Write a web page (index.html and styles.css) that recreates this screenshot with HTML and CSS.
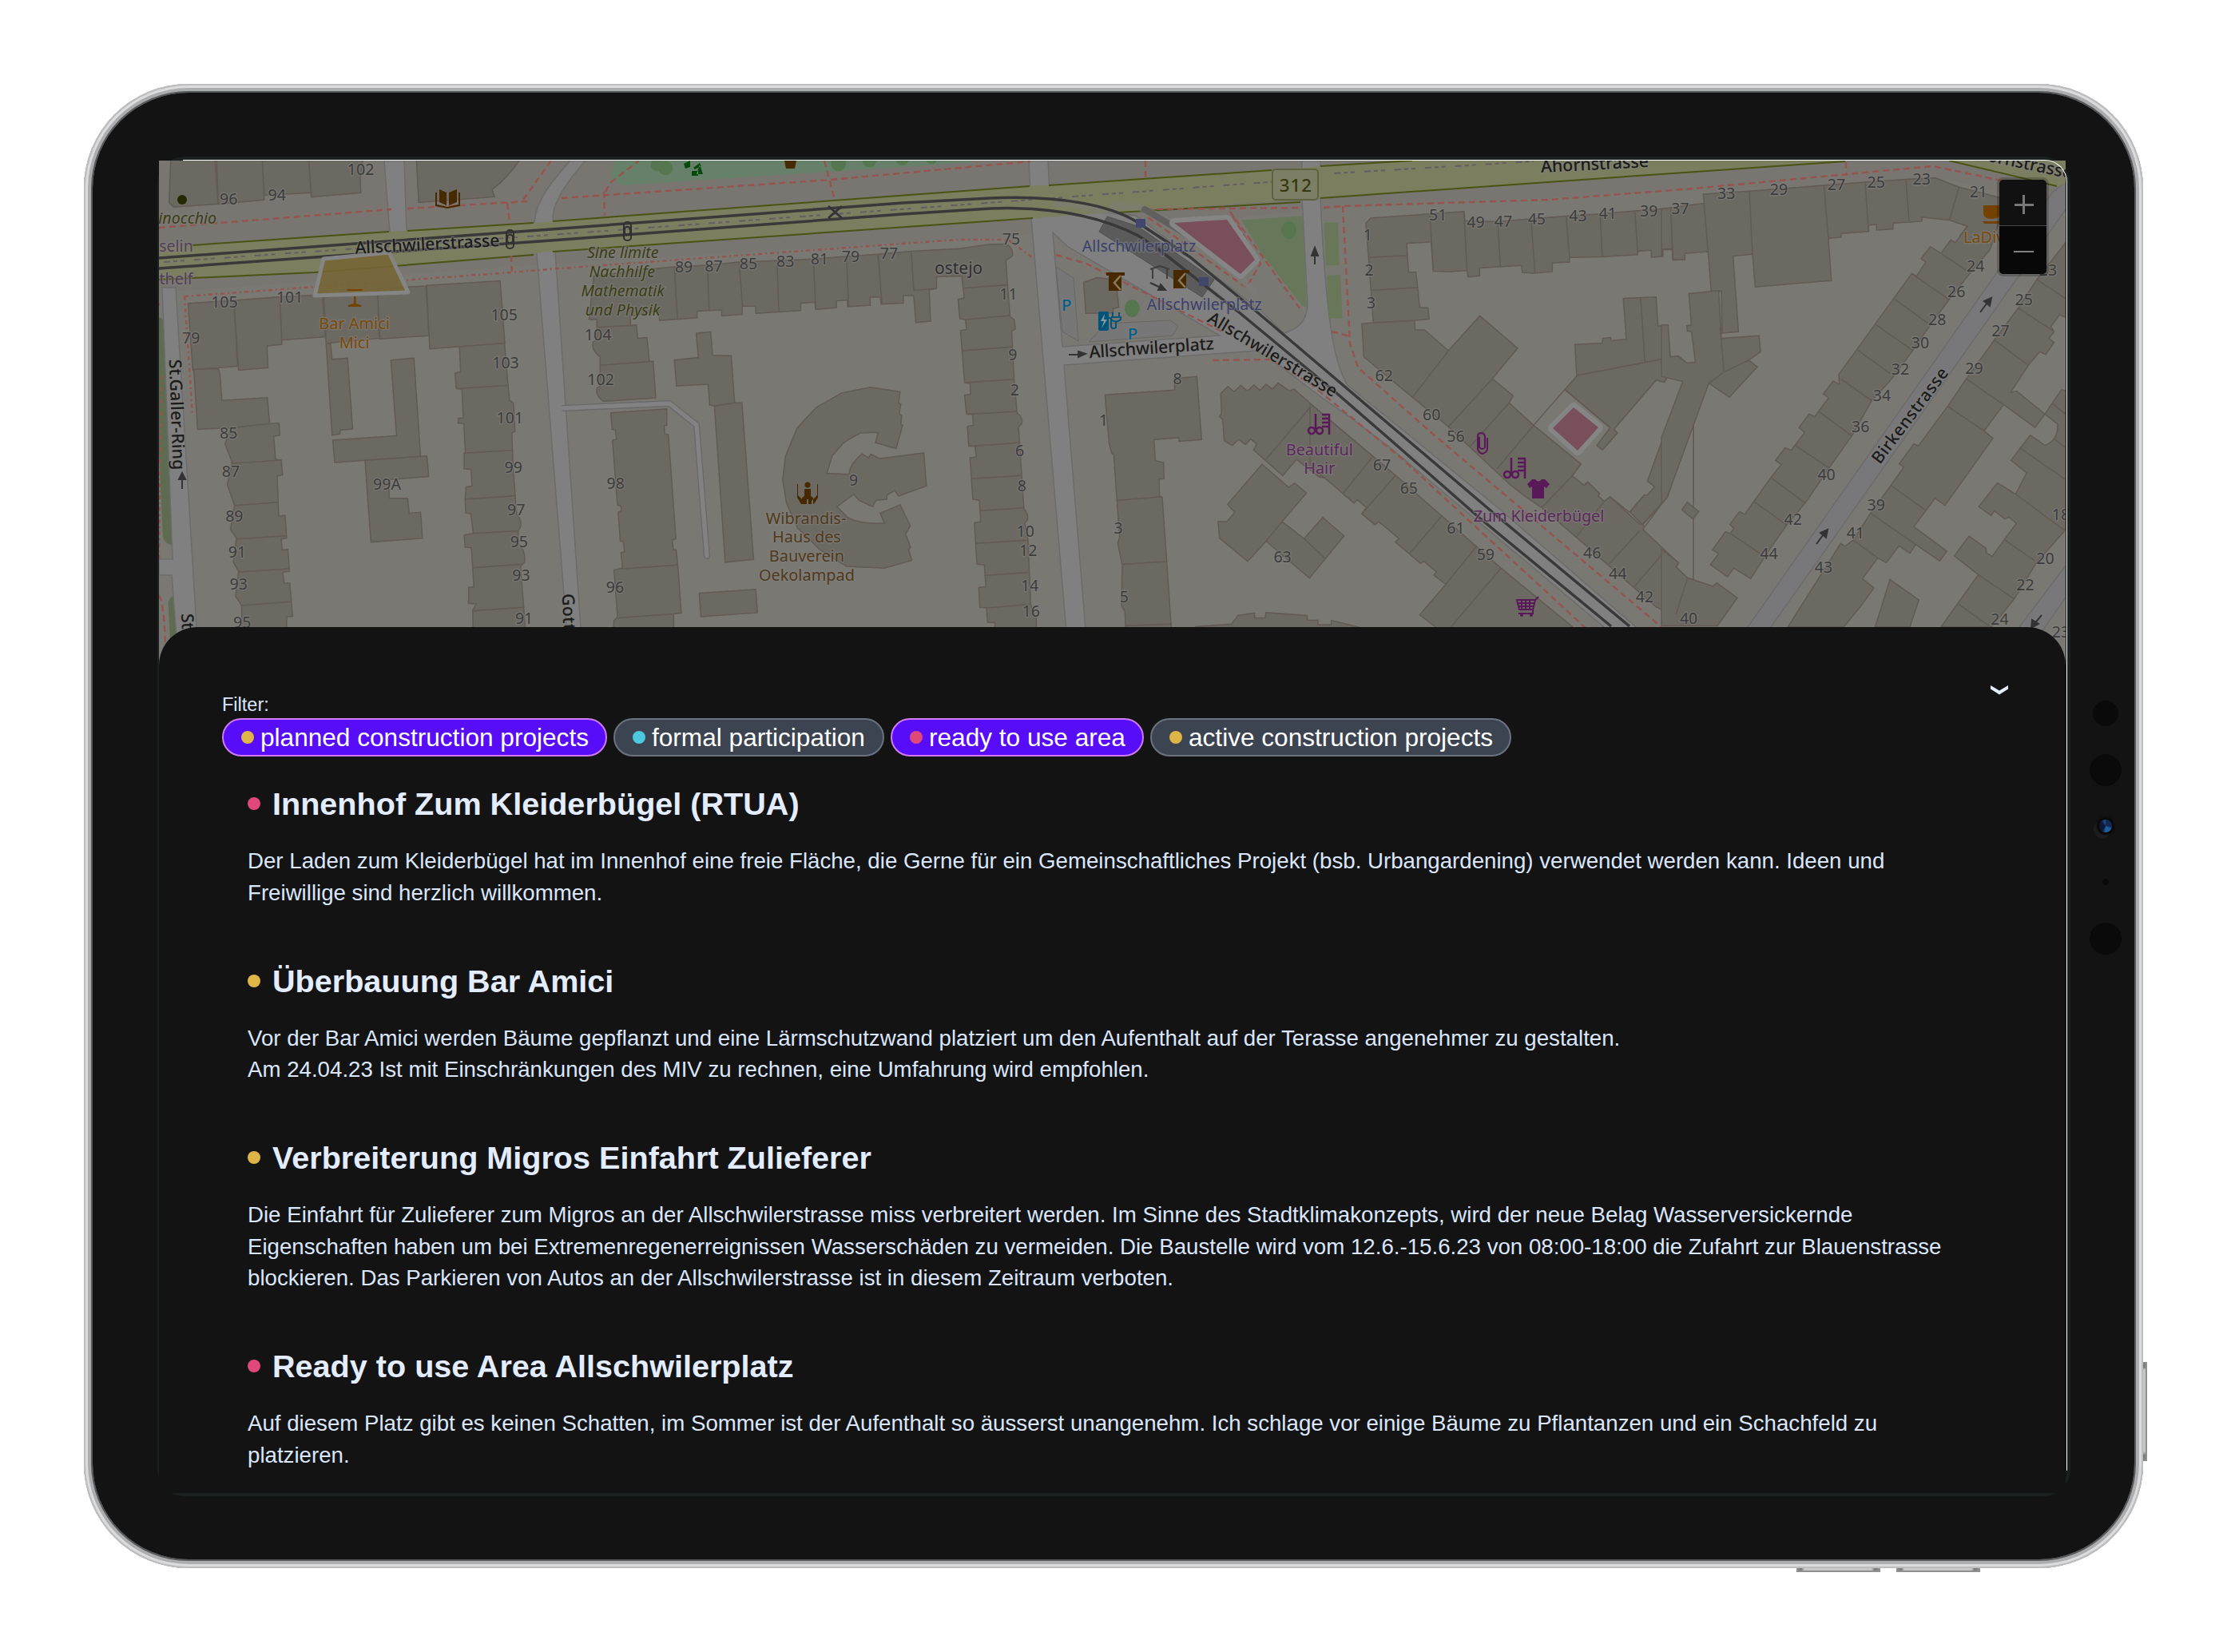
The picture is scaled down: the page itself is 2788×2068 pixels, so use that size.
FILE: index.html
```html
<!DOCTYPE html>
<html lang="de">
<head>
<meta charset="utf-8">
<title>Projekte</title>
<link rel="stylesheet" href="styles.css">
</head>
<body>
<div class="device">
  <i class="key key-side"></i><i class="key key-a"></i><i class="key key-b"></i>
  <div class="bezel">
    <div class="screen">
      <svg class="map" viewBox="199 201 2387 650" preserveAspectRatio="none">
        <rect class="land" x="199" y="201" width="2387" height="650"/>
        <path class="verge" d="M199 201H2440L2586 240V260L2440 225 2080 240 1650 262 1330 292 690 330 199 366Z"/>

        <!-- parks -->
        <g transform="translate(690 190) scale(.3954 .389)">
          <path class="park" d="M205 26 188 70 195 90 225 108 1330 34V26Z"/>
          <g class="tree"><circle cx="335" cy="42" r="20"/><circle cx="362" cy="52" r="23"/><circle cx="910" cy="38" r="24"/><circle cx="1008" cy="28" r="22"/><circle cx="1112" cy="24" r="20"/><circle cx="1204" cy="22" r="18"/></g>
        </g>
        <g transform="translate(190 190) scale(.3954 .389)">
          <path class="grass dark" d="M22 530 36 540 50 760 88 1235Q85 1262 60 1264 38 1260 35 1235L22 950ZM52 1450Q60 1425 80 1427 100 1432 102 1450L106 1568H58Z"/>
        </g>

        <!-- side streets -->
        <g class="street">
          <path d="M481 201H506L509 291H488Z"/>
          <path d="M714 201C690 228 671 250 669 280L714 845H731L692 270C694 250 712 225 733 201Z"/>
          <path d="M1288 201H1312L1314 240H1290Z"/>
          <path fill-rule="evenodd" d="M1291 272 1340 850H1364L1332 457 1573 439C1600 452 1640 490 1683 517L1740 560 2007 784 2080 850H2130L2047 784 1877 637 1687 482C1670 455 1660 400 1653 248H1630L1637 381C1636 405 1622 413 1607 417L1580 390 1422 270 1300 258ZM1318 291 1337 309 1440 369 1527 420 1330 434Z"/>
          <path d="M1630 201H1653V212H1630Z"/>
          <path d="M203 360H220L250 850H225L215 720H199V700H216Z"/>
          <path class="lane" d="M2188 785 2500 341 2570 240 2586 228V262L2527 346 2217 785 2170 850H2140Z"/>
          <path class="lane" d="M2528 785 2586 708V748L2560 785 2520 850H2480Z"/>
        </g>
        <g transform="translate(1240 190) scale(.3333 .389)">
          <path class="grass" d="M942 220 1172 206 1188 500 1170 495 1020 330Z"/>
          <path class="grass dim" d="M1253 228h52l5 138h-50zM1264 398l50-2 8 140h-52z"/>
          <circle class="tree" cx="1121" cy="252" r="28"/>
          <circle class="tree" cx="532" cy="504" r="28"/>
        </g>
        <path class="alley-edge" d="M706 511 838 505 872 532 885 696"/>
        <path class="alley" d="M704 511 838 505 872 532 885 696"/>

        <!-- buildings, west block -->
        <g class="buildings" transform="translate(190 190) scale(.3954 .389)">
          <path d="M60 26 55 165 70 178 210 168 200 26ZM205 26 211 168 356 155 350 26ZM350 26 356 140 505 132 497 26ZM497 26 505 146 662 132 660 85 668 26ZM838 26 845 163 1085 145 1078 122Q1130 80 1165 26Z"/>
          <path d="M115 488 260 478 272 690 130 702ZM260 478 405 467 412 620 365 625 368 695 275 703ZM405 467 540 460 550 595 412 606ZM545 468 715 450 722 600 552 616ZM715 440 868 432 878 592 720 602ZM870 430 1103 415 1118 616 880 634Z"/>
          <path d="M133 700 210 697 216 715 222 800 366 791 373 875 403 873 405 912 386 916 392 990 410 992 414 1040 397 1043 402 1172 422 1170 427 1243 410 1246 413 1282 431 1280 436 1350 415 1353 419 1388 437 1388 446 1495 427 1497V1568H285V1460L265 1430 275 1350 258 1320 268 1243 249 1215 262 1138 239 1070 255 1000 232 940 250 888 145 893Z"/>
          <path class="party" d="M250 888 373 875M250 1003 410 992M262 1138 402 1128M268 1246 425 1236M275 1352 435 1342M282 1460 440 1448"/>
          <path d="M552 616 566 618 571 668 620 664 636 892 596 896V908L571 912ZM757 670 830 664 851 980 579 1000 573 928 775 914ZM675 992 871 979 877 1045 750 1055 752 1115 810 1115 815 1163 851 1160 857 1244 694 1256Z"/>
          <path d="M974 627 1117 616 1128 750 1133 800 1145 808 1150 900 1140 905 1144 1015 1155 1165Q1172 1185 1168 1205L1160 1220V1260Q1185 1285 1180 1320L1168 1335 1180 1500 1185 1568H1018L1016 1476 1027 1455 1003 1453V1402L1020 1400 1012 1275 992 1272 989 1233 1018 1228 1010 1165 994 1162 992 1118 995 1078 1014 1076 1011 1022 989 1020V970L993 968 988 875 970 873 971 858 986 856 982 764 964 762 960 712 978 708Z"/>
          <path class="party" d="M964 762 1128 752M989 970 1144 960M993 1118 1153 1107M1018 1228 1160 1220M1020 1338 1168 1328M1018 1477 1180 1466"/>
        </g>

        <!-- buildings, centre block -->
        <g class="buildings" transform="translate(690 190) scale(.3954 .389)">
          <path d="M135 400 290 380 390 370 495 365 595 355 715 350 830 345 935 337 1035 330 1140 320 1290 312 1385 298 1440 297Q1465 310 1460 335L1440 350 1445 428 1453 530 1466 540 1470 570 1458 577 1466 735 1475 840Q1495 855 1490 875L1480 885 1490 1045 1497 1150Q1512 1165 1508 1185L1500 1195 1510 1250 1518 1455 1536 1505V1568H1405V1515H1382L1378 1468 1357 1466 1354 1402 1376 1400 1372 1330 1348 1327 1340 1194 1360 1190 1356 1122 1335 1118 1326 985 1346 982 1342 948 1322 946 1318 884 1337 880 1335 845 1315 843 1309 783 1328 780 1326 745 1309 743 1296 575 1315 572 1312 540 1294 537 1288 475 1308 470 1300 400 1220 402V440L1197 444 1201 545 1155 550 1148 463 1115 463V487L1045 490 1042 468 1010 468V494L938 498V477L903 480V502L838 507 835 484 790 487V511L648 520V497H605V523L540 528V509L462 513V534L343 543 340 510 250 530 252 560 270 558 274 600 303 598 311 674 323 676 331 792 165 803Q140 785 145 760L155 755V660Q125 635 133 612L145 605V540H120Z"/>
          <path class="party" d="M390 370 400 540M495 365 500 510M595 355 606 497M715 350 721 515M830 345 838 507M935 337 942 497M1035 330 1047 488M1140 320 1148 446 1220 440M1308 438 1445 428M1312 540 1453 527M1300 640 1460 628M1309 743 1466 732M1315 845 1475 835M1322 948 1482 936M1330 1052 1488 1042M1357 1155 1497 1146M1345 1260 1505 1250M1372 1363 1510 1354M1376 1468 1518 1456M145 565 270 558M155 687 325 674"/>
          <path d="M459 584 505 579 511 655 570 656 581 808 604 808 641 1312 551 1321 517 818 502 815 497 748 397 754 390 670 466 662ZM189 840 366 827V880L358 882 360 908 371 910 395 1245 383 1250 387 1280 396 1282 401 1330 412 1484 388 1487V1568H198V1510L210 1496 199 1346 226 1340 221 1290 232 1288 229 1255 219 1253 212 1160 222 1156 221 1140 210 1137 194 928 207 925 203 895 193 893ZM469 1420 648 1408 653 1483 474 1496Z"/>
          <path class="party" d="M226 1342 401 1330M210 1500 388 1487M517 818 581 808"/>
          <path d="M1010 758 1105 772 1100 808 1107 812 1102 843 1110 850 1107 876 1113 880 1092 955 1027 936 1035 903 980 905Q940 925 925 938L890 978 873 1035 942 1038Q948 1000 985 972L1005 985 1012 973 1040 987 1180 969 1188 1075 1100 1108 1088 1090 1063 1105V1118L1028 1122 1018 1142 975 1122 958 1102 905 1142 940 1178Q985 1200 1055 1195L1042 1163 1105 1136 1137 1203 1122 1230 1138 1273 1132 1280 1142 1315 1055 1340 935 1334 850 1280 780 1210 745 1130 733 1055 742 980 778 890 840 822 920 776Z"/>
        </g>

        <!-- buildings, south of the square -->
        <g class="buildings" transform="translate(1240 190) scale(.3333 .389)">
          <path d="M350 420 400 405 470 412 482 500 460 505V518L358 520ZM430 782 692 767 690 730 775 723 793 926 708 932V920L614 926 619 994 650 1000 652 1052 633 1053 635 1110 645 1112 662 1318 682 1568H510L505 1480 492 1460 495 1330 478 1260 485 1240 475 1122 463 975 455 970 445 935Z"/>
          <path class="party" d="M475 1122 645 1110M495 1328 662 1318M505 1525 680 1520"/>
          <path d="M865 778 892 755 915 772 940 752 965 770 990 750 1012 768 1035 748 1058 764 1080 744 1125 770 1140 763 1208 815 1440 983 1500 1030V1215L1455 1190 1443 1200 1395 1165 1415 1143 1378 1120 1365 1130 1325 1100 1265 1050 1235 1047 1150 990 1098 1042 988 960 1000 940 978 925 958 942 932 926 908 945 878 930 872 862 860 852 868 840Z"/>
          <path class="party" d="M1208 815 1035 990M1345 930 1235 1047M1440 983 1325 1100M1500 1065 1415 1143"/>
          <path d="M1020 1005 1120 1080 1142 1066 1187 1098 1095 1190 1178 1245 1248 1177 1328 1236 1198 1372 1035 1253 966 1318 860 1243 855 1190H888L918 1160 890 1135Z"/>
          <path class="party" d="M1095 1190 1035 1253M1178 1245 1255 1308"/>
          <path d="M770 1528 905 1520 930 1492 992 1484V1500H1032L1035 1483 1190 1492V1508H1230V1522H1280V1508L1385 1530V1568H770Z"/>
        </g>

        <!-- buildings, north-east block -->
        <g class="buildings" transform="translate(1640 190) scale(.3333 .389)">
          <path d="M210 230 228 213 450 200 578 192 582 222 705 225 830 215 962 207 1090 200 1220 190 1352 182 1440 175V325H1408V347L1365 348 1362 314 1325 315V337L1282 340V317L1231 320V331L1098 338 975 340V355L910 358V386L842 391 797 388 795 366 637 374V399L594 403 590 382 523 386 463 384 455 290 363 295 370 388 398 387 412 501 443 502 448 538 392 543 395 573H430L520 640 638 528 780 632 685 730 763 785 748 808 840 880 1018 1005 985 1043 1030 1073 1043 1062 1088 1100 1083 1108 1105 1125 1127 1110 1240 1200 1340 1115 1440 790V690L1405 740 1343 722 1332 742 1300 735 1142 893 1155 905 1098 960 1077 945 1127 888 957 765 1002 722 995 620 1097 616 1100 600 1130 598V608L1188 603 1177 472 1300 467 1307 560 1343 562 1353 660 1385 658 1440 698V1120L1340 1115 1250 1200 1382 1322 1375 1335 1418 1372 1440 1375V1495H1380L1300 1465 1000 1240 870 1145 810 1110 750 1070 600 950 520 885 385 790 202 660 195 553 238 550 220 340Z"/>
          <path class="land" d="M1142 893 1300 735 1332 742 1343 722 1402 740 1268 1060 1295 1078 1268 1105H1255L1200 1160 1127 1110 1105 1125 1083 1108 1088 1100 1043 1062 1030 1073 985 1043 1018 1005 840 880 957 765 1127 888 1077 945 1098 960 1155 905Z"/>
          <path class="land" d="M1415 740 1440 700V1375H1418L1375 1335 1382 1322 1250 1215 1342 1110Z"/>
          <path d="M1342 722 1365 660 1385 658 1440 698V870L1342 1112 1248 1200 1202 1160 1255 1105H1268L1295 1078 1268 1060 1402 740Z"/>
          <path class="party" d="M450 200 463 384M578 192 590 382M705 225 715 370M830 215 845 390M962 207 975 340M1090 200 1098 338M1220 190 1231 320M1352 182 1365 340M220 340 363 334M228 446 405 437M238 550 392 543M520 640 385 790M685 730 520 885M748 808 600 950M840 880 703 1020M985 1043 870 1145M1105 1125 1000 1240M1240 1218 1122 1328M1333 1285 1218 1400M1418 1372 1380 1490M1002 720 1365 660M1242 470 1258 680M957 765 1127 888"/>
          <path d="M0 810 320 1040 495 1172 625 1270 718 1340 985 1528V1568H530L412 1490 510 1392 465 1362 475 1352 428 1318 415 1325 320 1255 335 1245 258 1190 245 1200 195 1165 212 1145 178 1120 165 1130 0 1010Z"/>
          <path class="party" d="M232 985 125 1098M320 1043 205 1155M495 1172 375 1292M625 1270 510 1392M718 1340 530 1528"/>
        </g>

        <!-- buildings along Birkenstrasse -->
        <g class="buildings" transform="translate(2080 190) scale(.3333 .4209)">
          <path d="M0 170 160 153 157 126 330 117 610 100 765 90 918 82 1030 78 1118 105 1290 140 1270 200 1235 290 1150 370 1080 440 1010 515 945 590 860 680 790 740 715 845 630 940 540 1045 470 1110 400 1190 335 1270 272 1238 248 1264 184 1228 215 1195 192 1184 240 1130 258 1135 272 1120 257 1108 293 1070 313 1078 410 970 450 930 428 918 465 880 487 888 538 835 517 820 555 780 575 788 628 732 608 720 645 682 668 692 666 662 940 362 958 370 993 328 975 318 1010 282 1050 302 1087 262 1103 270 1150 222 1082 203 978 195V207L870 212V230L808 233V216L778 218V237L675 243V254L627 258 638 383 352 402 342 305 269 310 289 535 228 540 225 414 187 415 175 297 88 302V320L43 321 40 288 5 290V310H0Z"/>
          <path class="party" d="M35 170 43 320M160 153 175 297M330 117 342 305M610 100 627 258M765 90 778 237M918 82 930 206M1118 105 1082 203M1150 220 1120 250M1050 302 1158 360M940 362 1080 440M870 435 1010 515M803 513 945 592M738 590 860 660M675 677 790 740M590 772 715 845M500 872 630 940M413 970 540 1045M347 1040 470 1110M258 1135 370 1195"/>
          <path d="M103 422 215 413 225 555 367 547 372 595 328 620 360 640 255 730 178 688 20 1030 0 1045V850L80 683 0 668V515H25L33 610 62 608 95 628 127 626 113 535 97 533 95 517 112 515ZM97 1042 140 1070 118 1092 77 1065ZM0 1183 65 1222 55 1235 98 1267 192 1292 208 1282 285 1327 210 1410H0Z"/>
          <path class="party" d="M220 520 235 655 178 688M235 655 328 620M98 1267 55 1375"/>
          <path d="M1518 270 1410 380 1340 465 1250 560 1145 675 1075 757 965 875 948 868 893 928 910 938 862 992 785 1075 720 1155 690 1173 673 1165 475 1413H685L750 1350 798 1297 755 1270 812 1208 845 1222 892 1172 933 1194 955 1168 1045 1217 1072 1188 948 1115 1028 1030 1065 1052 1245 852 1212 830 1285 752 1403 820 1440 780 1488 810Q1490 860 1440 873L1385 843 1313 918 1372 955 1330 1018 1262 985 1192 1055 1238 1082 1250 1068 1290 1092 1305 1087 1333 1105 1242 1203 1220 1193V1180L1155 1143 1100 1202 1190 1258 1050 1413H1240L1325 1330 1410 1220 1512 1130 1518 1120V710L1502 708 1440 780 1335 712 1312 715 1378 635 1420 595 1443 603 1475 567 1455 555 1475 535 1463 520 1495 485 1518 492Z"/>
          <path class="party" d="M1410 380 1518 437M1340 465 1475 535M1250 560 1378 635M1145 675 1285 752M1075 757 1212 830M862 992 990 1065M785 1075 955 1168M720 1155 812 1208M1345 880 1518 975M1330 1018 1512 1125M1290 1155 1400 1215M1190 1258 1325 1330M1115 1345 1230 1410M1475 855 1518 880M1468 748 1518 780"/>
          <path d="M858 1272 967 1333 933 1413H803Z"/>
        </g>

        <!-- main road -->
        <path class="main" d="M199 310 487 290 668 279 1289 233 1592 213 1653 208 1768 201H2310L2080 218 1653 248 1293 273 692 315 394 341 199 350Z"/>
        <path class="main" d="M2440 201 2575 234 2586 230V201Z"/>
        <path class="main-edge" d="M241 307 487 290M510 289 668 279M692 277 1289 233M1313 232 1592 213M1653 208 1768 201M199 350 394 341 668 319M692 315 1293 273M1400 266 1628 253M1653 248 2080 218 2310 202M2440 201 2575 233"/>
        <path class="centre" d="M205 328 690 294 1250 253 1600 227M1670 217 1920 202"/>
        <g class="path">
          <path d="M199 285 490 262M510 261 660 252M703 248 1040 225 1290 202M655 250 690 201M758 240 765 228 800 201M635 254 638 278M756 240 757 270M1032 201 1045 250M640 320 641 340M199 382V380M1434 201V224"/>
          <path class="dotted" d="M231 371 640 341 700 336 1200 300 1262 300 1292 322M231 371 241 520M199 700 202 470"/>
          <path d="M1322 319 1360 330 1530 415M1518 451 1590 450 1640 480 1756 575 2000 800M1435 262 1630 260M1437 272 1560 360 1578 330 1540 265 1630 390M1657 260 1680 258 1940 250 2120 236 2420 208 2510 227M2311 203V220M1681 258 1690 430 1700 460 1790 540 2080 785M1667 415 1690 421M199 745Q208 760 207 850"/>
        </g>

        <!-- tram -->
        <path class="casing" d="M1390 258 1425 259C1480 280 1530 325 1573 368M1320 254C1400 256 1440 290 1530 375"/>
        <path class="platform" d="M1376 290 1386 271 1424 283 1520 350 1505 372Z"/>
        <path class="stop" d="M1433 262 1558 337"/>
        <g class="rail">
          <path d="M199 323 690 287 1130 254 1240 248C1330 244 1390 258 1422 277L1490 322 1573 390 1640 447 1740 532 1873 645 2040 784"/>
          <path d="M199 336 690 301 1130 268 1240 261C1320 258 1380 272 1425 295L1453 314 1550 390 1672 491 1740 550 1853 649 2017 784"/>
        </g>

        <!-- parking -->
        <path class="parking" d="M1322 334 1344 348 1350 427 1330 415ZM1363 428 1385 405 1465 401 1475 408 1468 420Z"/>

        <!-- project areas -->
        <path class="area yellow" d="M394 370 405 324 437 321 487 316 511 366Z"/>
        <path class="area pink" d="M1470 279 1536 275 1571 325 1553 343Z"/>
        <path class="area pink" d="M1970 510 2001 535 1975 564 1944 536Z"/>

        <!-- road shield -->
        <rect class="shield" x="1593" y="212" width="57" height="38" rx="4"/>

        <!-- pictograms -->
        <g class="brown">
          <path d="M550 237 559 241V257L550 253ZM572 237 562 241V257L572 253ZM545 241V258L560 261 576 258V241H574V256L560 259 547 256V241Z"/>
          <path d="M982 201H997L995 211H984Z"/>
          <circle cx="1011" cy="607" r="3.500"/><path d="M1007 612H1015V621L1018 623V631H1012V625H1010V631H1004V623L1007 621ZM999 606V620L1006 627V631H1003L998 623V606ZM1023 606V620L1016 627V631H1019L1024 623V606Z"/>
          <path d="M1385 341H1408V345H1404V364H1388V345H1385Z"/><path d="M1466 338H1489V342H1485V361H1469V338Z"/>
        </g>
        <path class="chev" d="M1403 345 1395 354 1403 363M1484 342 1476 351 1484 360"/>
        <path class="shelter" d="M1440 337 1452 333 1464 337M1443 337V349M1461 337V349"/>
        <g class="orange"><path d="M434 362H454L453 364H435ZM443 371H445.500V380L452 382V384H436V382L443 380Z"/><path d="M2483 257H2504V270Q2500 274 2493 274 2485 274 2483 268ZM2482 277H2504V280H2484Z"/></g>
        <g class="charge"><rect x="1375" y="390" width="13" height="24" rx="2"/><path d="M1388 398H1391V409Q1393 413 1397 410V402M1393 391V396M1401 391V396M1391 397H1403V400Q1397 405 1391 400"/></g>
        <path class="bolt" d="M1383 393 1378 402H1382L1379 411 1386 400H1382Z"/>
        <g class="blue"><rect x="1422" y="274" width="12" height="11"/><rect x="1501" y="347" width="12" height="11"/></g>
        <g class="comb" id="comb"><circle cx="1642" cy="539" r="4"/><circle cx="1652" cy="539" r="4"/><path d="M1647 518V537M1664 518V544M1655 519H1664M1655 524H1664M1655 529H1664M1655 534H1664"/></g>
        <use href="#comb" transform="translate(245 55)"/>
        <path class="clip" d="M1852 547V560Q1856 564 1859 560V546Q1858 542 1854 542 1850 542 1850 546V562Q1851 567 1856 568 1862 566 1862 561V548"/>
        <path class="shirt" d="M1918 600H1922Q1926 605 1930 600H1934L1940 606 1936 611 1933 609V624H1918V609L1915 611 1912 606Z"/>
        <path class="cart" d="M1926 747 1922 751 1919 763H1902L1899 751H1921M1901 755H1920M1902 759H1919M1905 751V763M1910 751V763M1915 751V763M1919 763V768H1901"/>
        <g class="purple-dot"><circle cx="1905" cy="770" r="2"/><circle cx="1917" cy="770" r="2"/></g>
        <circle class="olive-dot" cx="228" cy="250" r="6"/>
        <path class="play" d="M856 205l8-4v8l-6 2zM868 210l8-6 2 4-8 4zM866 214h8v6h-8zM876 206l-4 12h8l-2-6z"/>
        <g class="signal"><rect x="634" y="288" width="9" height="23" rx="4"/><rect x="635" y="294" width="7" height="10" rx="3"/><rect x="781" y="278" width="9" height="23" rx="4"/><rect x="782" y="284" width="7" height="10" rx="3"/></g>
        <path class="cross" d="M1037 258 1054 273M1054 258 1037 273"/>
        <g class="arrow">
          <path d="M228 612V594M224 600 228 592 232 600ZM1338 444H1352M1350 440 1359 443 1350 447ZM1646 331V314M1642 320 1646 310 1650 320ZM1440 354 1455 361M1453 356 1459 363 1450 363ZM2479 391 2490 376M2484 377 2493 373 2491 383ZM2274 681 2285 666M2279 667 2288 663 2286 673ZM2556 770 2546 782M2544 776 2543 786 2552 781Z"/>
        </g>

        <!-- labels -->
        <g class="labels" transform="scale(1.77806)">
          <g class="nr">
            <text x="254" y="123">102</text><text x="161" y="144">96</text><text x="195" y="141">94</text><text x="158" y="216.500">105</text><text x="204" y="213">101</text><text x="355" y="225.500">105</text><text x="134.500" y="242">79</text><text x="356" y="259">103</text><text x="359" y="298">101</text><text x="161" y="309">85</text><text x="162.500" y="336">87</text><text x="361.500" y="333">99</text><text x="272.500" y="345">99A</text><text x="165" y="367.500">89</text><text x="363.500" y="363">97</text><text x="167" y="392.500">91</text><text x="365.500" y="385.500">95</text><text x="168" y="415">93</text><text x="367" y="409">93</text><text x="170.500" y="442">95</text><text x="369" y="439">91</text>
            <text x="421" y="239.500">104</text><text x="423" y="271">102</text><text x="433.500" y="344">98</text><text x="433" y="417.500">96</text><text x="481.500" y="192">89</text><text x="502.500" y="191">87</text><text x="527" y="189.500">85</text><text x="553" y="188">83</text><text x="577" y="186">81</text><text x="599" y="184.500">79</text><text x="626" y="182">77</text><text x="712" y="172">75</text><text x="710" y="211">11</text><text x="713" y="253.500">9</text><text x="714.500" y="278.500">2</text><text x="718" y="321">6</text><text x="719.500" y="346">8</text><text x="601" y="342">9</text><text x="722" y="378">10</text><text x="724" y="391.500">12</text><text x="725" y="416">14</text><text x="726" y="434">16</text>
            <text x="829" y="270.500">8</text><text x="777" y="299.500">1</text><text x="787.500" y="375.500">3</text><text x="791.500" y="424">5</text><text x="903" y="396">63</text><text x="973" y="331.500">67</text><text x="963" y="169.500">1</text><text x="964" y="194">2</text><text x="965.500" y="217">3</text><text x="974.500" y="268">62</text><text x="1008" y="296">60</text><text x="1025" y="311">56</text><text x="992" y="347.500">65</text><text x="1025" y="375.500">61</text><text x="1046" y="394">59</text><text x="1012.500" y="155">51</text><text x="1039" y="160.500">49</text><text x="1058.500" y="159.500">47</text><text x="1082" y="158">45</text><text x="1111" y="156">43</text><text x="1132" y="154">41</text><text x="1161" y="152.500">39</text><text x="1183" y="150.500">37</text><text x="1121" y="393">46</text><text x="1139" y="408">44</text><text x="1158" y="424">42</text><text x="1189" y="439.500">40</text>
            <text x="1215.500" y="140">33</text><text x="1252.500" y="137">29</text><text x="1293" y="134">27</text><text x="1321" y="132">25</text><text x="1353" y="130">23</text><text x="1393" y="139">21</text><text x="1391" y="191">24</text><text x="1377.500" y="209.500">26</text><text x="1364" y="229">28</text><text x="1352" y="245.500">30</text><text x="1338" y="264">32</text><text x="1325" y="282.500">34</text><text x="1310" y="304">36</text><text x="1286" y="338">40</text><text x="1262.500" y="369.500">42</text><text x="1245.500" y="393.500">44</text><text x="1442" y="194">23</text><text x="1425" y="215">25</text><text x="1408.500" y="237">27</text><text x="1390" y="263">29</text><text x="1321" y="359.500">39</text><text x="1306.500" y="379">41</text><text x="1284" y="403.500">43</text><text x="1451" y="366">18</text><text x="1440" y="397">20</text><text x="1426" y="415.500">22</text><text x="1408" y="440">24</text><text x="1451" y="449">23</text>
          </g>
          <g class="olive"><text x="132" y="157.500" textLength="41">inocchio</text><text x="438.500" y="181.500">Sine limite</text><text x="438" y="195">Nachhilfe</text><text x="438.500" y="208.500">Mathematik</text><text x="438.500" y="222">und Physik</text></g>
          <g class="mauve"><text x="124" y="177">selin</text><text x="124" y="200">thelf</text></g>
          <g class="amber"><text x="249.500" y="231.500">Bar Amici</text><text x="249.500" y="245">Mici</text><text x="1400" y="171">LaDiva</text></g>
          <g class="umber"><text x="567.500" y="369">Wibrandis-</text><text x="568" y="382">Haus des</text><text x="568" y="395.500">Bauverein</text><text x="568" y="409">Oekolampad</text></g>
          <g class="navy"><text x="802" y="177" textLength="80">Allschwilerplatz</text><text x="848" y="218" textLength="81">Allschwilerplatz</text></g>
          <g class="violet"><text x="929" y="320.500">Beautiful</text><text x="929" y="333.500">Hair</text><text x="1083.500" y="367" textLength="92">Zum Kleiderbügel</text></g>
          <g class="cyan"><text x="751" y="219">P</text><text x="797.500" y="239">P</text></g>
          <text class="shop" x="675" y="193">ostejo</text>
          <text class="ref" x="912.500" y="135">312</text>
          <g class="road">
            <text transform="translate(301 176) rotate(-3)" textLength="102">Allschwilerstrasse</text>
            <text transform="translate(811 249) rotate(-4)" textLength="88">Allschwilerplatz</text>
            <text transform="translate(894 253) rotate(31)" textLength="104">Allschwilerstrasse</text>
            <text transform="translate(1123 119.500) rotate(-3)" textLength="76">Ahornstrasse</text>
            <text transform="translate(1421 118) rotate(12)" textLength="76">Ahornstrasse</text>
            <text transform="translate(1348 295) rotate(-53)" textLength="81">Birkenstrasse</text>
            <text transform="translate(120.500 292) rotate(88)" textLength="78">St.Galler-Ring</text>
            <text transform="translate(129 469) rotate(88)" textLength="74">St.Galler-Ring</text>
            <text transform="translate(397 451) rotate(88)" textLength="66">Gotthelfstr.</text>
          </g>
        </g>
      </svg>

      <div class="zoom"><span class="in"></span><span class="out"></span></div>

      <main class="panel">
        <svg class="toggle" viewBox="0 0 22 12"><path d="M0 0 11 6.500 22 0V4.500L11 11.500 0 4.500Z"/></svg>
        <div class="filter-label">Filter:</div>
        <div class="chips">
          <button class="chip on c1"><i class="dot gold"></i><span>planned construction projects</span></button>
          <button class="chip c2"><i class="dot aqua"></i><span>formal participation</span></button>
          <button class="chip on c3"><i class="dot rose"></i><span>ready to use area</span></button>
          <button class="chip c4"><i class="dot gold"></i><span>active construction projects</span></button>
        </div>
        <div class="projects">
          <article><h2><i class="dot rose"></i>Innenhof Zum Kleiderbügel (RTUA)</h2>
            <p>Der Laden zum Kleiderbügel hat im Innenhof eine freie Fläche, die Gerne für ein Gemeinschaftliches Projekt (bsb. Urbangardening) verwendet werden kann. Ideen und<br>Freiwillige sind herzlich willkommen.</p></article>
          <article><h2><i class="dot gold"></i>Überbauung Bar Amici</h2>
            <p>Vor der Bar Amici werden Bäume gepflanzt und eine Lärmschutzwand platziert um den Aufenthalt auf der Terasse angenehmer zu gestalten.<br>Am 24.04.23 Ist mit Einschränkungen des MIV zu rechnen, eine Umfahrung wird empfohlen.</p></article>
          <article><h2><i class="dot gold"></i>Verbreiterung Migros Einfahrt Zulieferer</h2>
            <p>Die Einfahrt für Zulieferer zum Migros an der Allschwilerstrasse miss verbreitert werden. Im Sinne des Stadtklimakonzepts, wird der neue Belag Wasserversickernde<br>Eigenschaften haben um bei Extremenregenerreignissen Wasserschäden zu vermeiden. Die Baustelle wird vom 12.6.-15.6.23 von 08:00-18:00 die Zufahrt zur Blauenstrasse<br>blockieren. Das Parkieren von Autos an der Allschwilerstrasse ist in diesem Zeitraum verboten.</p></article>
          <article><h2><i class="dot rose"></i>Ready to use Area Allschwilerplatz</h2>
            <p>Auf diesem Platz gibt es keinen Schatten, im Sommer ist der Aufenthalt so äusserst unangenehm. Ich schlage vor einige Bäume zu Pflantanzen und ein Schachfeld zu<br>platzieren.</p></article>
        </div>
      </main>
    </div>
    <div class="sensors"><i class="s32"></i><i class="s40"></i><i class="lens"></i><i class="s8"></i><i class="s40 last"></i></div>
  </div>
</div>
</body>
</html>
```

FILE: styles.css
```css
* { box-sizing: border-box; }
body { margin: 0; width: 2788px; height: 2068px; padding: 105px; background: #fff; overflow: hidden; font-family: "Liberation Sans", Arial, sans-serif; }
i { display: block; font-style: normal; }

.device { position: relative; width: 2578px; height: 1858px; padding: 11px; border-radius: 131px; background: #bcbcbc;
  box-shadow: inset 0 0 0 2px #bdbdbd, inset 0 0 0 5px #dcdcde, inset 0 0 0 9px #acadaf, inset 0 0 0 11px #58595b; }
.key { position: absolute; background: linear-gradient(90deg, #999 0, #777 6px, #c8c8c8 10px, #c8c8c8 94px, #777 98px, #999); border: 0 solid #8f8f8f; }
.key-side { left: 2578px; top: 1600px; width: 5px; height: 124px; border-right-width: 2px; background: linear-gradient(#888 0, #777 6px, #c4c4c4 10px, #c4c4c4 112px, #777 117px, #888); }
.key-a, .key-b { top: 1858px; width: 105px; height: 5px; border-bottom-width: 2px; }
.key-a { left: 2144px; }
.key-b { left: 2269px; }

.bezel { display: flex; height: 1836px; padding: 85px 0 0 83px; border-radius: 120px; background: #131313; }
.screen { position: relative; width: 2387px; height: 1668px; background: #131313; }
.screen::before { content: ""; position: absolute; inset: -5px -6px -4px -2px; border: 4px solid #1a1f20; border-left-width: 2px; border-radius: 34px; }
.screen::after { content: ""; position: absolute; inset: -1px -2px 28px 30px; border: 1px solid #fff; border-left: 0; border-bottom: 0; border-top-right-radius: 28px; }
.map { position: relative; display: block; width: 2387px; height: 650px; }

.zoom { position: absolute; z-index: 2; top: 24px; right: 24px; width: 59px; height: 118px; border-radius: 5px; overflow: hidden; background: #111; outline: 3px solid rgba(0,0,0,.2); }
.zoom span { display: block; height: 59px; background: linear-gradient(#808080, #808080) center / 25px 2px no-repeat; }
.zoom .in { height: 58px; border-bottom: 1px solid #4a4a4a; background: linear-gradient(#777, #777) 19px 30px / 24px 3px no-repeat, linear-gradient(#777, #777) 29px 19px / 3px 24px no-repeat; }
.zoom .out { height: 60px; background-color: #080808; background-position: 18px 31px; }

.panel { position: relative; z-index: 1; height: 1084px; margin-top: -66px; padding: 94px 79px 0; border-radius: 48px 48px 0 0; background: #131313; color: #dbe6fb; overflow: hidden; }
.toggle { position: absolute; right: 72px; top: 73px; width: 22px; height: 12px; fill: #e3eeff; }
.filter-label { height: 20px; font-size: 23.500px; line-height: 6px; }
.chips { display: flex; gap: 8px; height: 48px; }
.chip { display: flex; align-items: center; gap: 8px; height: 48px; padding: 0 0 0 22px; border: 2px solid #6b7280; border-radius: 24px; background: #3d4451; color: #fff; font: 31.600px "Liberation Sans", Arial, sans-serif; white-space: nowrap; }
.chip.on { background: #570df8; border-color: #cf7cf5; }
.c1 { width: 482px; } .c2 { width: 339px; } .c3 { width: 317px; } .c4 { width: 452px; }
.dot { flex: none; width: 16px; height: 16px; border-radius: 50%; }
.gold { background: #dfb547; } .aqua { background: #4cc9de; } .rose { background: #e0487c; }

.projects { padding: 33px 0 0 32px; }
article { padding-bottom: 64.400px; }
h2 { display: flex; align-items: center; gap: 15px; height: 52px; margin: 0 0 26px; color: #e3edff; font-size: 39.600px; line-height: 52px; white-space: nowrap; }
p { margin: 0; font-size: 27.660px; line-height: 39.600px; white-space: nowrap; }

.sensors { display: flex; flex-direction: column; align-items: center; width: 40px; margin: 676px 0 0 30px; }
.sensors i { border-radius: 50%; background: #0a0a0a; }
.s32 { width: 32px; height: 32px; }
.s40 { width: 40px; height: 40px; margin-top: 35px; }
.sensors .lens { width: 16px; height: 16px; margin-top: 42px; background: conic-gradient(#0f2b55 0 25%, #1e5f9e 35% 50%, #0b1734 60% 85%, #27588c); box-shadow: 0 0 2px 3px #080808, -4px 4px 0 3px #1d1d1d; }
.s8 { width: 8px; height: 8px; margin-top: 58px; }
.s40.last { margin-top: 47px; }

/* map */
.land { fill: #7a7873; stroke: none; }
.verge { fill: #797570; }
.park { fill: #668069; } .tree { fill: #56764f; }
.grass { fill: #67785a; } .grass.dim { fill: #687758; } .grass.dark { fill: #5d6b51; }
.street { fill: #808081; stroke: #6c6c6c; stroke-width: 1.500; }
.street .lane { fill: #78787a; }
.alley-edge { fill: none; stroke: #68686a; stroke-width: 8; stroke-linecap: round; stroke-linejoin: round; }
.alley { fill: none; stroke: #828283; stroke-width: 5.500; stroke-linecap: round; stroke-linejoin: round; }
.buildings path { fill: #6c6862; stroke: #635a54; stroke-width: 1.500; vector-effect: non-scaling-stroke; }
.buildings .party { fill: none; }
.buildings .land { fill: #7a7873; }
.main { fill: #7c7f5f; }
.main-edge { fill: none; stroke: #4a5313; stroke-width: 2; }
.centre { fill: none; stroke: #655d63; stroke-width: 2; stroke-dasharray: 8 4 5 4 5 12; }
.path { fill: none; stroke: #97534d; stroke-width: 2.400; stroke-dasharray: 8 5; }
.path .dotted { stroke-dasharray: 5 4 2 4; }
.casing { fill: none; stroke: #7b7b7b; stroke-width: 9; opacity: .5; }
.platform { fill: #5b5b5b; stroke: #505050; }
.stop { fill: none; stroke: #62605f; stroke-width: 8; stroke-linecap: round; }
.rail { fill: none; stroke: #393939; stroke-width: 3.500; }
.parking { fill: #777777; stroke: #696664; stroke-width: 1; }
.area { stroke: #858585; stroke-width: 5; stroke-linejoin: round; }
.yellow { fill: rgba(117,101,52,.88); } .pink { fill: #784f5a; stroke-width: 12; paint-order: stroke; }
.shield { fill: #7c7f64; stroke: #5e613f; stroke-width: 2; }
.brown { fill: #472900; } .orange { fill: #744200; } .blue { fill: #41466c; }
.chev { fill: none; stroke: #8a7a60; stroke-width: 2.500; }
.shelter { fill: none; stroke: #3f3f3f; stroke-width: 2; }
.charge rect { fill: #005479; } .charge path { fill: none; stroke: #005479; stroke-width: 2; } .bolt { fill: #8a9aa2; }
.comb { fill: none; stroke: #591958; stroke-width: 2.500; } .clip, .cart { fill: none; stroke: #591958; stroke-width: 2; }
.shirt, .purple-dot { fill: #591958; } .olive-dot { fill: #272800; } .play { fill: #044a0b; }
.signal { fill: none; stroke: #303030; stroke-width: 2; } .cross { stroke: #333338; stroke-width: 3; }
.arrow path { fill: #333; stroke: #333; stroke-width: 2; }
.labels { font-family: "Noto Sans", sans-serif; font-size: 11px; text-anchor: middle; paint-order: stroke; stroke: rgba(128,127,124,.6); stroke-width: 1.600px; stroke-linejoin: round; }
.nr { fill: #3c3c3c; } .olive { fill: #3b3e14; font-style: italic; font-size: 11px; } .mauve { fill: #523f56; }
.amber { fill: #7a4a07; font-size: 11.200px; } .umber { fill: #50391b; font-size: 11.200px; } .navy { fill: #3a3f6e; } .violet { fill: #5c285d; font-size: 11.200px; }
.cyan { fill: #005f8c; font-size: 11.500px; font-weight: 500; } .shop { fill: #2e2e2e; font-size: 11.800px; } .ref { fill: #35380f; font-size: 12.500px; font-weight: 500; stroke: none; letter-spacing: .6px; }
.road { fill: #1b1b1b; font-size: 12px; font-weight: 500; }
```
